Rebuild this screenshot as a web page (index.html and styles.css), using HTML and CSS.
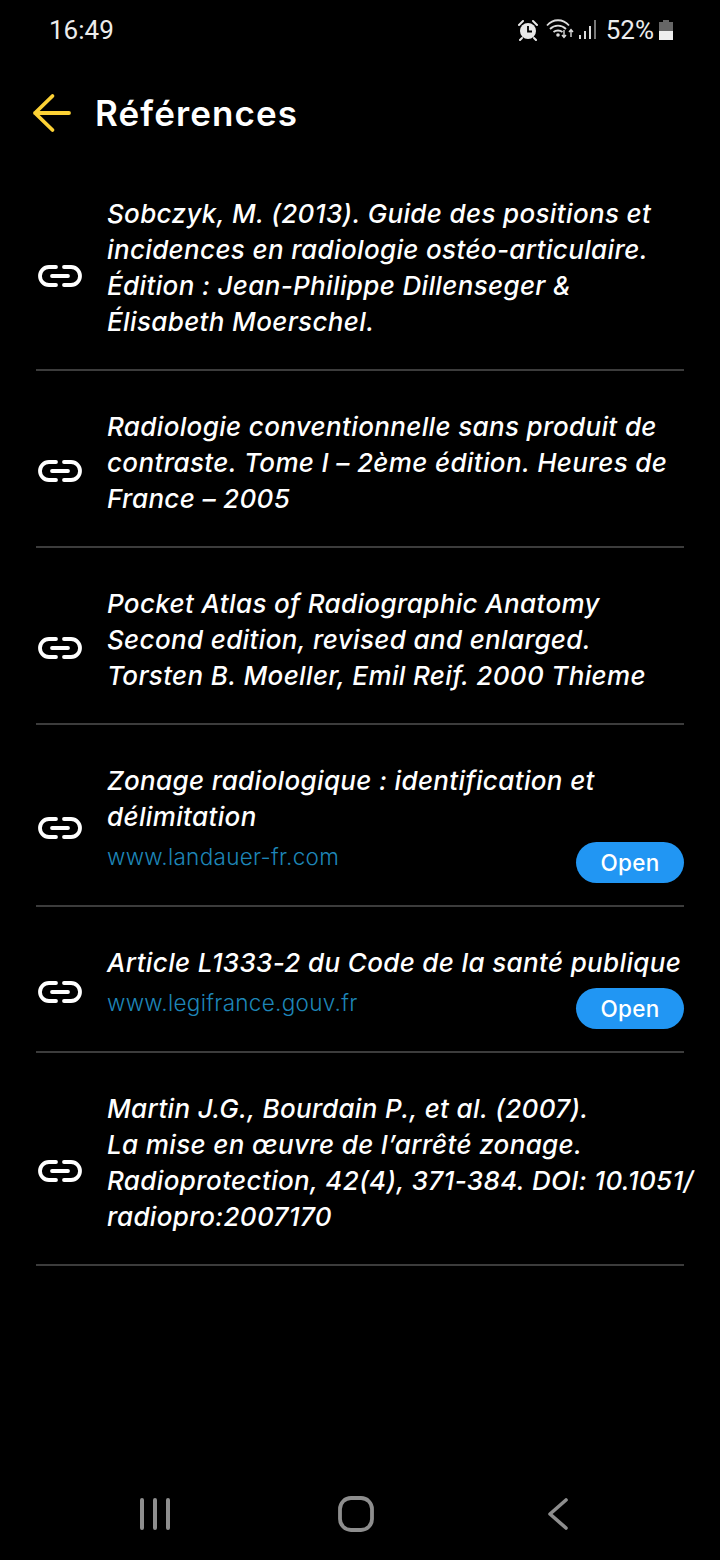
FILE: index.html
```html
<!DOCTYPE html>
<html lang="fr">
<head>
<meta charset="utf-8">
<title>Références</title>
<link rel="stylesheet" href="styles.css">
</head>
<body>
<svg class="defs" width="0" height="0" aria-hidden="true"><defs>
<symbol id="link" viewBox="0 0 44 22"><path d="M18 2H11a9 9 0 0 0 0 18h7M26 2h7a9 9 0 0 1 0 18h-7M14 11h16" fill="none" stroke="currentColor" stroke-width="3.800" stroke-linecap="round"/></symbol>
</defs></svg>
<div class="phone">
  <div class="status">
    <span class="time">16:49</span>
    <div class="status-right">
      <svg class="s-alarm" width="22" height="22" viewBox="0 0 22 22"><circle cx="11" cy="12" r="8" fill="#e8e8e8"/><path d="M11 7v5.500h4" fill="none" stroke="#000" stroke-width="1.800"/><path d="M2 6l4-4M20 6l-4-4M5 19l-2 2M17 19l2 2" stroke="#e8e8e8" stroke-width="2" stroke-linecap="round"/></svg>
      <svg class="s-wifi" width="28" height="22" viewBox="0 0 28 22"><path d="M1 6.500c6-7 16-7 22 0M4 10c4.500-4.500 11.500-4.500 16 0M7.500 13c2.500-2 6.500-2 9 0" fill="none" stroke="#dcdcdc" stroke-width="1.800"/><circle cx="12" cy="16" r="1.800" fill="#dcdcdc"/><path d="M18 11v7M16 16l2 2.500 2-2.500M25 18v-7M23 13l2-2.500 2 2.500" fill="none" stroke="#dcdcdc" stroke-width="1.400"/></svg>
      <svg class="s-signal" width="18" height="22" viewBox="0 0 18 22"><path d="M2 16v4M7 12v8M12 7v13" stroke="#dcdcdc" stroke-width="2"/><path d="M17 1v19" stroke="#777" stroke-width="2"/></svg>
      <span class="battery-pct">52%</span>
      <svg class="s-battery" width="14" height="21" viewBox="0 0 14 21"><path d="M4 0h6v2h4v9H0V2h4z" fill="#666"/><path d="M0 11h14v9H0z" fill="#eee"/></svg>
    </div>
  </div>

  <header class="header">
    <svg class="back" width="40" height="40" viewBox="0 0 40 40"><path d="M37 20H3M20.500 3L3 20l17.500 17" fill="none" stroke="#fdd235" stroke-width="3.800" stroke-linecap="round" stroke-linejoin="round"/></svg>
    <h1 class="title">Références</h1>
  </header>

  <ul class="list">
    <li class="row">
      <svg class="icon"><use href="#link"/></svg>
      <div class="body"><p class="text">Sobczyk, M. (2013). Guide des positions et<br>incidences en radiologie ostéo-articulaire.<br>Édition : Jean-Philippe Dillenseger &amp;<br>Élisabeth Moerschel.</p></div>
    </li>
    <li class="row">
      <svg class="icon"><use href="#link"/></svg>
      <div class="body"><p class="text">Radiologie conventionnelle sans produit de<br>contraste. Tome I – 2ème édition. Heures de<br>France – 2005</p></div>
    </li>
    <li class="row">
      <svg class="icon"><use href="#link"/></svg>
      <div class="body"><p class="text">Pocket Atlas of Radiographic Anatomy<br>Second edition, revised and enlarged.<br>Torsten B. Moeller, Emil Reif. 2000 Thieme</p></div>
    </li>
    <li class="row">
      <svg class="icon"><use href="#link"/></svg>
      <div class="body"><p class="text">Zonage radiologique : identification et<br>délimitation</p>
        <div class="link-row"><span class="url">www.landauer-fr.com</span><span class="open">Open</span></div></div>
    </li>
    <li class="row">
      <svg class="icon"><use href="#link"/></svg>
      <div class="body"><p class="text">Article L1333-2 du Code de la santé publique</p>
        <div class="link-row"><span class="url">www.legifrance.gouv.fr</span><span class="open">Open</span></div></div>
    </li>
    <li class="row">
      <svg class="icon"><use href="#link"/></svg>
      <div class="body"><p class="text">Martin J.G., Bourdain P., et al. (2007).<br>La mise en œuvre de l’arrêté zonage.<br>Radioprotection, 42(4), 371-384. DOI: 10.1051/<br>radiopro:2007170</p></div>
    </li>
  </ul>

  <nav class="navbar">
    <svg width="32" height="34" viewBox="0 0 32 34"><path d="M3 3v28M16 3v28M29 3v28" stroke="#8e8e8e" stroke-width="4" stroke-linecap="round"/></svg>
    <svg class="nav-home" width="36" height="36" viewBox="0 0 36 36"><rect x="2" y="2" width="32" height="32" rx="11" fill="none" stroke="#8e8e8e" stroke-width="3.800"/></svg>
    <svg width="22" height="34" viewBox="0 0 22 34"><path d="M19 3L3 17l16 14" fill="none" stroke="#8e8e8e" stroke-width="3.600" stroke-linecap="round" stroke-linejoin="round"/></svg>
  </nav>
</div>
</body>
</html>
```
FILE: styles.css
```css
* { box-sizing: border-box; }
html, body { margin: 0; padding: 0; background: #000; }
.defs { position: absolute; }
.phone {
  width: 720px;
  height: 1560px;
  background: #000;
  color: #fff;
  display: flex;
  flex-direction: column;
  font-family: Inter, "Liberation Sans", sans-serif;
  overflow: hidden;
}
.status {
  height: 60px;
  padding: 0 47px 0 49px;
  display: flex;
  justify-content: space-between;
  align-items: center;
  font-family: Roboto, sans-serif;
  font-size: 26px;
  color: #ececec;
}
.status-right { display: flex; align-items: center; }
.s-alarm { margin-right: 7px; }
.s-signal { margin-left: 4px; margin-right: 10px; }
.s-battery { margin-left: 5px; }
.header {
  height: 98px;
  padding: 8px 0 0 32px;
  display: flex;
  align-items: center;
  gap: 23px;
}
.title { margin: 0; font-size: 35px; font-weight: 600; letter-spacing: 1.100px; }
.list { list-style: none; margin: 0 36px; padding: 0; }
.row {
  display: flex;
  align-items: center;
  padding: 38px 0 29px;
  border-bottom: 2px solid #3c3c3c;
}
.icon { width: 44px; height: 22px; flex: none; color: #fff; margin: 16px 25px 0 2px; }
.body { flex: 1; min-width: 0; }
.text {
  margin: 0;
  font-size: 26px;
  line-height: 36px;
  font-style: italic;
  font-weight: 500;
  letter-spacing: 0.350px;
  white-space: nowrap;
}
.link-row {
  display: flex;
  justify-content: space-between;
  margin: 7px 0 -7px;
}
.url { font-size: 22.500px; font-weight: 300; color: #1e86b8; letter-spacing: 0.300px; line-height: 32px; margin-top: -1px; }
.open {
  width: 108px;
  height: 41px;
  border-radius: 21px;
  background: #2196f3;
  color: #fff;
  font-size: 22.500px;
  font-weight: 500;
  letter-spacing: 0.300px;
  display: flex;
  align-items: center;
  justify-content: center;
}
.navbar {
  margin-top: auto;
  height: 92px;
  padding: 0 151px 0 139px;
  display: flex;
  justify-content: space-between;
  align-items: center;
}
.nav-home { margin-right: 6px; }
```
